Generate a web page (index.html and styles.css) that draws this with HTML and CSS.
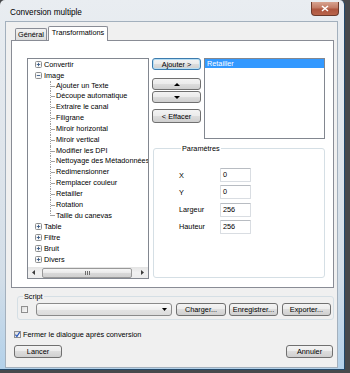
FILE: index.html
```html
<!DOCTYPE html>
<html lang="fr">
<head>
    <meta charset="UTF-8">
    <title>Conversion multiple</title>
    <link rel="stylesheet" href="styles.css">
</head>
<body>
    <!-- icônes réutilisées -->
    <svg class="defs" width="0" height="0">
        <symbol id="plus" viewBox="0 0 7 7">
            <rect x="0.5" y="0.5" width="6" height="6" rx="1" fill="#f7f7f7" stroke="#8e8f8f"/>
            <path d="M1.8 3.5h3.4M3.5 1.8v3.4" stroke="#3a5a86" stroke-width="0.9"/>
        </symbol>
        <symbol id="minus" viewBox="0 0 7 7">
            <rect x="0.5" y="0.5" width="6" height="6" rx="1" fill="#f7f7f7" stroke="#8e8f8f"/>
            <path d="M1.8 3.5h3.4" stroke="#3a5a86" stroke-width="0.9"/>
        </symbol>
    </svg>

    <div class="window">
        <!-- barre de titre -->
        <div class="titlebar">
            <span class="title">Conversion multiple</span>
            <span class="close-btn">
                <svg width="8" height="7" viewBox="0 0 8 7"><path d="M1 1l6 5M7 1l-6 5" stroke="#fff" stroke-width="1.6"/></svg>
            </span>
        </div>

        <div class="client">
            <!-- onglets -->
            <div class="tabs">
                <span class="tab tab-general">Général</span>
                <span class="tab tab-active">Transformations</span>
            </div>

            <div class="tab-panel">
                <!-- arbre des transformations -->
                <div class="tree-box">
                    <div class="tree">
                        <div class="tree-row root"><svg class="exp"><use href="#plus"/></svg><span>Convertir</span></div>
                        <div class="tree-row root"><svg class="exp"><use href="#minus"/></svg><span>Image</span></div>
                        <div class="tree-row child"><span class="branch"></span><span>Ajouter un Texte</span></div>
                        <div class="tree-row child"><span class="branch"></span><span>Découpe automatique</span></div>
                        <div class="tree-row child"><span class="branch"></span><span>Extraire le canal</span></div>
                        <div class="tree-row child"><span class="branch"></span><span>Filigrane</span></div>
                        <div class="tree-row child"><span class="branch"></span><span>Miroir horizontal</span></div>
                        <div class="tree-row child"><span class="branch"></span><span>Miroir vertical</span></div>
                        <div class="tree-row child"><span class="branch"></span><span>Modifier les DPI</span></div>
                        <div class="tree-row child"><span class="branch"></span><span>Nettoyage des Métadonnées</span></div>
                        <div class="tree-row child"><span class="branch"></span><span>Redimensionner</span></div>
                        <div class="tree-row child"><span class="branch"></span><span>Remplacer couleur</span></div>
                        <div class="tree-row child"><span class="branch"></span><span>Retailler</span></div>
                        <div class="tree-row child"><span class="branch"></span><span>Rotation</span></div>
                        <div class="tree-row child last"><span class="branch"></span><span>Taille du canevas</span></div>
                        <div class="tree-row root"><svg class="exp"><use href="#plus"/></svg><span>Table</span></div>
                        <div class="tree-row root"><svg class="exp"><use href="#plus"/></svg><span>Filtre</span></div>
                        <div class="tree-row root"><svg class="exp"><use href="#plus"/></svg><span>Bruit</span></div>
                        <div class="tree-row root"><svg class="exp"><use href="#plus"/></svg><span>Divers</span></div>
                    </div>
                    <!-- barre de défilement horizontale -->
                    <div class="hscroll">
                        <span class="sb-arrow"><svg width="3" height="5" viewBox="0 0 3 5"><path d="M3 0v5L0 2.5z" fill="#3c3c3c"/></svg></span>
                        <span class="sb-thumb"><svg width="5" height="4" viewBox="0 0 5 4"><path d="M0.5 0v4M2.5 0v4M4.5 0v4" stroke="#6d6d6d" stroke-width="1"/></svg></span>
                        <span class="sb-arrow sb-right"><svg width="3" height="5" viewBox="0 0 3 5"><path d="M0 0v5l3-2.5z" fill="#3c3c3c"/></svg></span>
                    </div>
                </div>

                <div class="right-col">
                    <div class="top-row">
                        <div class="btn-col">
                            <button class="btn btn-default btn-add">Ajouter &gt;</button>
                            <button class="btn btn-up"><svg width="6" height="3" viewBox="0 0 6 3"><path d="M0 3h6L3 0z" fill="#000"/></svg></button>
                            <button class="btn btn-down"><svg width="6" height="3" viewBox="0 0 6 3"><path d="M0 0h6L3 3z" fill="#000"/></svg></button>
                            <button class="btn btn-clear">&lt; Effacer</button>
                        </div>
                        <div class="listbox">
                            <div class="list-item selected">Retailler</div>
                        </div>
                    </div>

                    <fieldset class="group params">
                        <legend>Paramètres</legend>
                        <div class="param-grid">
                            <span class="param-label">X</span><span class="field">0</span>
                            <span class="param-label">Y</span><span class="field">0</span>
                            <span class="param-label">Largeur</span><span class="field">256</span>
                            <span class="param-label">Hauteur</span><span class="field">256</span>
                        </div>
                    </fieldset>
                </div>
            </div>

            <!-- script -->
            <fieldset class="group script-group">
                <legend>Script</legend>
                <span class="checkbox"></span>
                <span class="combo"><svg width="5" height="3" viewBox="0 0 5 3"><path d="M0 0h5L2.5 3z" fill="#000"/></svg></span>
                <button class="btn btn-load">Charger...</button>
                <button class="btn btn-save">Enregistrer...</button>
                <button class="btn btn-export">Exporter...</button>
            </fieldset>

            <div class="check-row">
                <span class="checkbox checked"><svg width="7" height="7" viewBox="0 0 7 7"><path d="M1.4 3.6l1.5 1.9 2.8-4.3" fill="none" stroke="#2553b8" stroke-width="1.2"/></svg></span>
                <span>Fermer le dialogue après conversion</span>
            </div>

            <div class="footer">
                <button class="btn btn-run">Lancer</button>
                <button class="btn btn-cancel">Annuler</button>
            </div>
        </div>
    </div>
</body>
</html>
```

FILE: styles.css
```css
/* Boîte de dialogue "Conversion multiple" (style Windows 7) */
* {
    box-sizing: border-box;
}

body {
    margin: 0;
    background: #47494c;
    font-family: 'Liberation Sans', Arial, sans-serif;
    font-size: 7.3px;
    color: #000;
}

.defs {
    position: absolute;
}

/* cadre de la fenêtre */
.window {
    width: 345px;
    height: 370px;
    display: flex;
    flex-direction: column;
    background: linear-gradient(#e9edf1 0%, #dfe5eb 40%, #d3dee8 75%, #b3d1ea 100%);
    border-right: 1px solid #23496b;
    border-bottom: 1px solid #23496b;
    border-radius: 5px 5px 0 0;
}

.titlebar {
    height: 22px;
    display: flex;
    justify-content: space-between;
    align-items: flex-start;
    padding-left: 10px;
}

.title {
    font-size: 8.2px;
    line-height: 22px;
    padding-top: 2px;
}

.close-btn {
    width: 28px;
    height: 14px;
    margin: 2px 5px 0 0;
    border: 1px solid #6c3a2c;
    border-top: none;
    border-radius: 0 0 4px 4px;
    background: linear-gradient(#d7a390 0%, #c27a64 45%, #ad553e 55%, #b9654c 100%);
    display: flex;
    align-items: center;
    justify-content: center;
}

.client {
    flex: 1;
    margin: 0 7px 2px 6px;
    background: #f0f0f0;
    box-shadow: 0 0 0 1px #a3b0bd;
    padding-top: 4px;
    display: flex;
    flex-direction: column;
}

/* onglets */
.tabs {
    height: 14px;
    display: flex;
    align-items: flex-end;
    padding-left: 9px;
    position: relative;
    z-index: 1;
}

.tab {
    height: 12px;
    line-height: 11px;
    text-align: center;
    border: 1px solid #898c95;
    border-bottom: none;
    border-radius: 2px 2px 0 0;
    background: linear-gradient(#f2f2f2, #e8e8e8 50%, #dcdcdc);
}

.tab-general {
    width: 32px;
}

.tab-active {
    width: 60px;
    height: 15px;
    line-height: 12px;
    margin-left: 1px;
    margin-bottom: -1px;
    background: #fff;
}

.tab-panel {
    width: 323px;
    height: 248px;
    margin-left: 5px;
    border: 1px solid #898c95;
    background: #fff;
    display: flex;
    gap: 3px;
    padding: 17px 8px 8px 15px;
}

/* arbre */
.tree-box {
    width: 122px;
    display: flex;
    flex-direction: column;
    border: 1px solid #828790;
    background: #fff;
}

.tree {
    flex: 1;
    overflow: hidden;
    white-space: nowrap;
}

.tree-row {
    height: 10.83px;
    display: flex;
    align-items: center;
}

.tree-row.root {
    padding-left: 7px;
    gap: 2px;
}

.exp {
    width: 7px;
    height: 7px;
    flex: none;
}

.tree-row.child {
    padding-left: 22px;
    align-items: stretch;
}

.tree-row.child span:last-child {
    line-height: 10.83px;
    padding-left: 1px;
}

.branch {
    width: 5px;
    flex: none;
    border-left: 1px dotted #a0a0a0;
    background: linear-gradient(#a0a0a0, #a0a0a0) no-repeat left center / 100% 1px;
}

.tree-row.last .branch {
    height: 50%;
    background-position: left bottom;
}

.hscroll {
    height: 11px;
    display: flex;
    align-items: center;
    background: linear-gradient(#e4e4e4, #f1f1f1 50%, #ececec);
}

.sb-arrow {
    width: 11px;
    height: 11px;
    display: flex;
    align-items: center;
    justify-content: center;
}

.sb-right {
    margin-left: auto;
}

.sb-thumb {
    width: 90px;
    height: 10px;
    margin-left: 3px;
    border: 1px solid #999;
    border-radius: 2px;
    background: linear-gradient(#f6f6f6, #e9e9e9 50%, #d9d9d9 51%, #d0d0d0);
    display: flex;
    align-items: center;
    justify-content: center;
}

/* colonne de droite */
.right-col {
    flex: 1;
    display: flex;
    flex-direction: column;
}

.top-row {
    height: 81px;
    display: flex;
    gap: 3px;
}

.btn-col {
    width: 49px;
    display: flex;
    flex-direction: column;
}

.btn {
    font: inherit;
    color: #000;
    padding: 0;
    border: 1px solid #707070;
    border-radius: 3px;
    background: linear-gradient(#f3f3f3 0%, #ebebeb 49%, #dddddd 50%, #cfcfcf 100%);
    display: flex;
    align-items: center;
    justify-content: center;
}

.btn-default {
    border-color: #3d7bad;
    box-shadow: inset 0 0 0 1px #b6def4;
}

.btn-add {
    height: 12px;
}

.btn-up {
    height: 12px;
    margin-top: 8px;
}

.btn-down {
    height: 12px;
    margin-top: 1px;
}

.btn-clear {
    height: 14px;
    margin-top: 6px;
}

.listbox {
    flex: 1;
    border: 1px solid #828790;
    background: #fff;
}

.list-item {
    height: 9px;
    line-height: 9px;
    padding-left: 2px;
}

.list-item.selected {
    background: #3399ff;
    color: #fff;
}

/* cadres de groupe */
.group {
    margin: 0;
    border: 1px solid #d5dfe5;
    border-radius: 3px;
    min-width: 0;
}

.group legend {
    padding: 0 1px;
    margin-left: 2px;
    line-height: 9px;
}

.params {
    flex: 1;
    margin: 5px 0 1px 1px;
    padding: 15px 0 0 25px;
}

.param-grid {
    display: grid;
    grid-template-columns: 41px 31px;
    grid-auto-rows: 14px;
    row-gap: 3.3px;
    align-items: center;
}

.field {
    height: 14px;
    line-height: 12px;
    padding-left: 2px;
    border: 1px solid #d9dde2;
    border-top-color: #b8bcc2;
    border-radius: 1px;
    background: #fff;
}

.script-group {
    margin: 4px 3px 0 11px;
    padding: 2px 2px 3px 3px;
    display: flex;
    align-items: center;
    height: 28px;
}

.checkbox {
    width: 7px;
    height: 7px;
    flex: none;
    border: 1px solid #8f8f8f;
    background: linear-gradient(135deg, #dcdcdc, #fbfbfb);
    display: flex;
    align-items: center;
    justify-content: center;
}

.checkbox svg {
    margin: -1px;
}

.combo {
    width: 136px;
    height: 13px;
    margin-left: 8px;
    border: 1px solid #8a8a8a;
    border-radius: 3px;
    background: linear-gradient(#fafafa, #efefef 50%, #e3e3e3 51%, #dcdcdc);
    display: flex;
    align-items: center;
    justify-content: flex-end;
    padding-right: 4px;
}

.btn-load,
.btn-save,
.btn-export {
    height: 13px;
}

.btn-load {
    width: 50px;
    margin-left: 4px;
}

.btn-save {
    width: 49px;
    margin-left: 3px;
}

.btn-export {
    width: 49px;
    margin-left: 4px;
}

.check-row {
    display: flex;
    align-items: center;
    gap: 2px;
    height: 7px;
    margin-top: 11px;
    padding-left: 8px;
}

.footer {
    display: flex;
    justify-content: space-between;
    margin-top: 7px;
    padding: 0 4px 0 8px;
}

.btn-run {
    width: 48px;
    height: 13px;
}

.btn-cancel {
    width: 47px;
    height: 13px;
}
```
